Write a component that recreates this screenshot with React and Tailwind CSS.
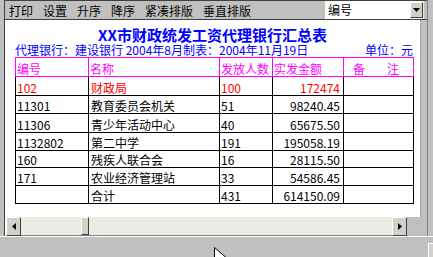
import React from 'react'

const rows = [
    { no: '102', name: '财政局', count: '100', amount: '172474', red: true, h: 'h-[19px]' },
    { no: '11301', name: '教育委员会机关', count: '51', amount: '98240.45', h: 'h-[18px]' },
    { no: '11306', name: '青少年活动中心', count: '40', amount: '65675.50', h: 'h-[19px]' },
    { no: '1132802', name: '第二中学', count: '191', amount: '195058.19', h: 'h-[18px]' },
    { no: '160', name: '残疾人联合会', count: '16', amount: '28115.50', h: 'h-[17px]' },
    { no: '171', name: '农业经济管理站', count: '33', amount: '54586.45', h: 'h-[18px]' },
    { no: '', name: '合计', count: '431', amount: '614150.09', h: 'h-[18px]' },
]

const menu = ['打印', '设置', '升序', '降序', '紧凑排版', '垂直排版']

const App = () => {
    return (
        <div className="relative w-[433px] h-[257px] overflow-hidden bg-[#c0c0c0] text-[12px] leading-[14px] text-black font-['Noto_Sans_CJK_SC','Noto_Sans',sans-serif]">
            <div className="flex h-[236px]">
                <div className="w-[4px] shrink-0" />
                <div className="w-px shrink-0 bg-[#404040]" />

                <div className="flex w-[422px] shrink-0 flex-col">
                    {/* toolbar */}
                    <div className="flex h-[20px] shrink-0 border-y border-[#404040]">
                        <div className="flex flex-1 items-end gap-[10px] pl-[4px] pb-[1px]">
                            {menu.map((m) => (
                                <span key={m}>{m}</span>
                            ))}
                        </div>
                        <div className="flex w-[99px] items-center border-r border-[#e8e8e8] bg-white">
                            <span className="flex-1 pl-[3px]">编号</span>
                            <div className="flex h-[16px] w-[13px] items-center justify-center border-t border-l border-white border-r border-b border-r-[#404040] border-b-[#404040] bg-[#d4d0c8]">
                                <svg width="7" height="4" viewBox="0 0 7 4">
                                    <path d="M0 0h7L3.5 4z" fill="#000" />
                                </svg>
                            </div>
                        </div>
                        <div className="w-[3px]" />
                    </div>

                    {/* report */}
                    <div className="flex h-[197px] shrink-0">
                        <div className="w-[415px] bg-white pt-[7px] text-[#0000ff]">
                            <div className="h-[16px] text-center text-[15px] font-bold leading-[15px]">XX市财政统发工资代理银行汇总表</div>
                            <div className="ml-[10px] flex h-[14px] w-[398px] justify-between leading-[14px]">
                                <span>代理银行：建设银行 2004年8月制表：2004年11月19日</span>
                                <span>单位：元</span>
                            </div>

                            <div className="ml-[10px] w-[399px]">
                                <div className="flex h-[20px] border border-r-0 border-[#ff00ff] text-[#ff00ff]">
                                    <div className="flex w-[73px] items-end border-r border-[#ff00ff] pl-px">编号</div>
                                    <div className="flex w-[131px] items-end border-r border-[#ff00ff] pl-px">名称</div>
                                    <div className="flex w-[53px] items-end border-r border-[#ff00ff] pl-px">发放人数</div>
                                    <div className="flex w-[71px] items-end border-r border-[#ff00ff] pl-px">实发金额</div>
                                    <div className="flex w-[70px] items-end justify-center gap-[22px] border-r border-[#ff00ff] pr-[5px]">
                                        <span>备</span>
                                        <span>注</span>
                                    </div>
                                </div>

                                {rows.map((r, i) => (
                                    <div key={i} className={`flex ${r.h} border-b border-l border-black ${r.red ? 'text-[#ff0000]' : 'text-black'}`}>
                                        <div className="flex w-[73px] items-end border-r border-black pl-px">{r.no}</div>
                                        <div className="flex w-[131px] items-end border-r border-black pl-[2px]">{r.name}</div>
                                        <div className="flex w-[53px] items-end border-r border-black pl-px">{r.count}</div>
                                        <div className="flex w-[71px] items-end justify-end border-r border-black pr-[3px]">{r.amount}</div>
                                        <div className="w-[70px] border-r border-black" />
                                    </div>
                                ))}
                            </div>
                        </div>
                        <div className="w-[7px] border-l border-[#a0a0a0]" />
                    </div>

                    {/* horizontal scrollbar */}
                    <div className="flex h-[19px] shrink-0">
                        <div className="w-px bg-white" />
                        <div className="flex w-[15px] items-center justify-center border-t border-l border-white border-r border-b border-r-[#404040] border-b-[#404040] bg-[#d4d0c8]">
                            <svg width="4" height="7" viewBox="0 0 4 7">
                                <path d="M4 0v7L0 3.5z" fill="#000" />
                            </svg>
                        </div>
                        <div className="flex w-[371px] border-b border-[#808080] bg-[#ecebe6] pl-[60px]">
                            <div className="w-[8px] border-t border-l border-white border-r border-b border-r-[#404040] border-b-[#404040] bg-[#d4d0c8]" />
                        </div>
                        <div className="flex w-[15px] items-center justify-center border-t border-l border-white border-r border-b border-r-[#404040] border-b-[#404040] bg-[#d4d0c8]">
                            <svg width="4" height="7" viewBox="0 0 4 7">
                                <path d="M0 0v7L4 3.5z" fill="#000" />
                            </svg>
                        </div>
                        <div className="flex-1" />
                    </div>
                </div>

                <div className="w-px shrink-0 bg-[#808080]" />
                <div className="w-[5px] shrink-0" />
            </div>

            <div className="h-px bg-white" />
            <div className="flex h-[20px] justify-end">
                <div className="mt-[6px] w-[5px] border-t border-l border-white bg-[#d4d0c8]" />
            </div>

            {/* mouse cursor */}
            <svg className="absolute left-[214px] top-[247px]" width="12" height="19" viewBox="0 0 12 19">
                <path d="M0.5 0.5v15l4-4 3 6 2-1-3-6h5.5z" fill="#fff" stroke="#000" strokeWidth="1" />
            </svg>
        </div>
    )
}

export default App
